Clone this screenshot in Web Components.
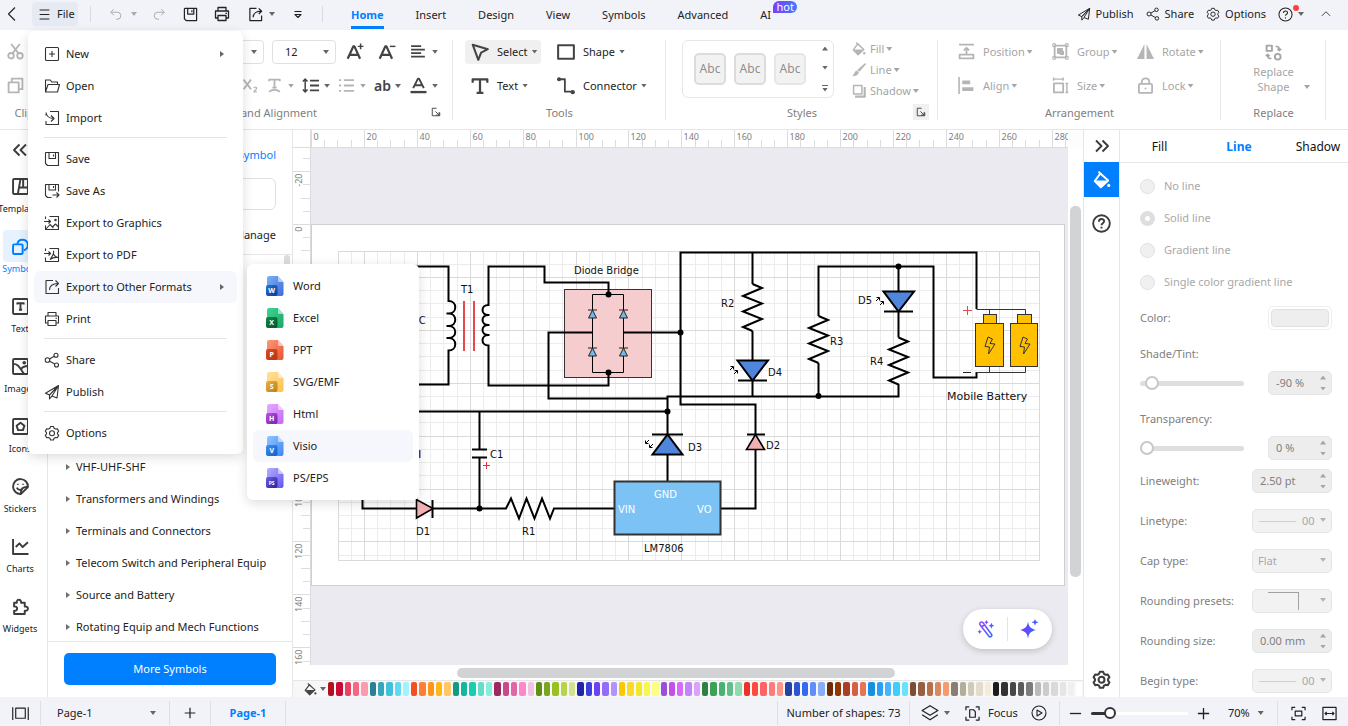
<!DOCTYPE html>
<html lang="en">
<head>
<meta charset="utf-8">
<meta name="viewport" content="width=device-width, initial-scale=1">
<title>Diagram editor</title>
<style>
html,body{margin:0;height:100%}
body{font:11px/16px "Noto Sans","Open Sans",sans-serif;color:#222;background:#fff;overflow:hidden}
</style>
</head>
<body>
<app-shell></app-shell>
<script>
const BASE = `
*{box-sizing:border-box}
:host{display:block}
button,input,select{font:inherit;color:inherit}
button{border:0;background:none;padding:0;margin:0;display:inline-flex;align-items:center;cursor:pointer;white-space:nowrap}
a{color:inherit;text-decoration:none}
.caret{flex:none;width:6px;height:4px;background:var(--caret,#666);clip-path:polygon(0 0,100% 0,50% 100%)}
.caret.up{clip-path:polygon(0 100%,100% 100%,50% 0)}
`;
function define(tag, render) {
  customElements.define(tag, class extends HTMLElement {
    constructor() { super(); this.attachShadow({ mode: 'open' }); }
    connectedCallback() {
      const t = document.createElement('template');
      const out = render(this);
      t.innerHTML = `<style>${BASE}${out.css}</style>${out.html}`;
      this.shadowRoot.replaceChildren(t.content.cloneNode(true));
      if (out.ready) out.ready(this.shadowRoot);
    }
  });
}

/* ---------- icons: 16 unit box, stroke in the current colour ---------- */
const floppy = '<path d="M2 1.5h12.5v13H3.500L1.500 12.500V2z"/><path d="M5 1.500v6h6.500v-6M9.500 3.500v2"/>';
const gear = '<path d="M6.600 1.500h2.800l.7 1.800 1.300.7 1.900-.3 1.400 2.400-1.200 1.500v1.300l1.200 1.500-1.400 2.400-1.900-.3-1.300.7-.7 1.800H6.600l-.7-1.800-1.300-.7-1.900.3-1.400-2.400L2.500 8.900V7.600L1.300 6.100l1.400-2.400 1.900.3 1.300-.7z"/><circle cx="8" cy="8.200" r="2.500"/>';
const shareI = '<circle cx="3.500" cy="8" r="2.300"/><circle cx="12" cy="3.200" r="2"/><circle cx="12.500" cy="13" r="2"/><path d="M5.500 7l4.700-2.700M5.700 9.200l5 2.800"/>';
const plane = '<path d="M14.500 1.500L1.500 9.200l4 1.800zM14.500 1.500L5.500 11v4l2.400-2.800M14.500 1.500L13 14l-5-2z"/>';
const ext = '<path d="M9 1.500H2v13h12.500V9"/><path d="M5.500 11c0-4 3-6.500 8.500-6.500M11.500 1.500l3 3-3 3"/>';
const printer = '<path d="M4 5V1.500h8V5M4 12H1.500V5h13v7H12"/><path d="M4 9.500h8v5H4zM11.500 7.300h1.500"/>';
const bucket = '<path d="M6.500 2.200L1.500 9l5.500 5.500L13.500 8.500z"/><path d="M4.800.5l3 3"/><path fill="currentColor" stroke="none" d="M2 8.500h11.200L7 14.500z"/><circle cx="14" cy="12.800" r="1.400" fill="currentColor" stroke="none"/>';
const ICONS = {
  back: '<path d="M11 1.500L4.500 8l6.500 6.500"/>',
  up: '<path d="M2.500 10.500L8 5l5.500 5.500"/>',
  menu: '<path d="M2 2.500h12M2 8h12M2 13.500h12"/>',
  undo: '<path d="M5.500 2.500L2 6l3.500 3.500M2 6h7.500a4 4 0 010 8H8"/>',
  redo: '<path d="M10.500 2.500L14 6l-3.500 3.500M14 6H6.500a4 4 0 000 8H8"/>',
  save: floppy, print: printer, ext, gear, share: shareI, publish: plane, bucket,
  more: '<path d="M4.500 5.500h7"/><path d="M5 8.500h6L8 11.500z"/>',
  help: '<circle cx="8" cy="8" r="7"/><path d="M5.800 6.500c0-3 4.400-3 4.400-.4 0 1.600-2.200 1.600-2.200 3.300M8 10.800v1.400"/>',
  new: '<rect x="1.500" y="1.500" width="13" height="13" rx="1"/><path d="M8 5v6M5 8h6"/>',
  open: '<path d="M1.500 14V2h4.800l1.500 2h5.700v2.500M1.500 14L4 6.500h11.500L13.500 14z"/>',
  import: '<path d="M6 1.500h8.500v13H2V11M2 5.500V4"/><path d="M2 2.500c.5 3.500 3 6 8 6M7 5.500l3 3-3 3"/>',
  saveas: '<path d="M7.500 14.500h-4l-2-2v-11h13v7"/><path d="M5 1.500v5.500h6.500v-5.500M9.500 3v2M8.500 12h6M12.500 9.500L15 12l-2.500 2.500"/>',
  exgfx: '<path d="M5.500 1.500h9v13h-13v-4M1.500 4V1.500"/><path d="M0 6.500h6.500M4.500 4.500l2 2-2 2M2 14l4-4.500 3.500 3.500M8.500 12l3-3 3 3"/><circle cx="11.500" cy="5" r=".7"/>',
  expdf: '<path d="M5.500 1.500h9v13h-13v-4M1.500 4V1.500"/><path d="M0 6.500h6.500M4.500 4.500l2 2-2 2"/><path d="M9 4c1.500 0 .5 4-3 8.500M9 6c1 3 2 4 5 4.500-3-.5-6 .5-8 2"/>',
  cut: '<circle cx="3.800" cy="12" r="2.600"/><circle cx="12.200" cy="12" r="2.600"/><path d="M5.200 9.800L12 1M10.800 9.800L4 1"/>',
  copy: '<rect x="1.500" y="5" width="9.500" height="9.500"/><path d="M4.500 4.500V1.500h10v10h-3"/>',
  fup: '<path d="M1.500 14L6.500 3h1l5 11M3.500 10.500h7"/><path stroke-width="1.300" d="M13 .5v5M10.500 3h5"/>',
  fdn: '<path d="M1.500 14L6.500 3h1l5 11M3.500 10.500h7"/><path stroke-width="1.300" d="M10.500 3h5"/>',
  align: '<path d="M1 3h9.500M1 6.300h13M1 9.600h9.500M1 12.900h13"/>',
  sub: '<path d="M1.500 2.500l7 9M8.500 2.500l-7 9"/><path stroke-width="1.100" d="M11.200 10.500c.3-1.500 2.800-1.300 2.600.2-.1 1-2.600 2.500-2.600 3.300H14"/>',
  tcurve: '<path d="M3 4V2.500h10V4M8 2.500v7.500M6 10h4M3 14c2-2.500 8-2.500 10 0"/>',
  spacing: '<path stroke-width="1.400" d="M3 2v12M.8 4.300L3 2l2.200 2.300M.8 11.700L3 14l2.200-2.300"/><path stroke-width="1.700" d="M7.500 3.500H16M7.500 8H16M7.500 12.500H16"/>',
  list: '<path d="M5.500 3h9.500M5.500 8h9.500M5.500 13h9.500M1 3h2M1 8h2M1 13h2"/>',
  acolor: '<path stroke-width="1.800" d="M3 10.500L7.500 1.500h1l4.500 9M4.500 7.700h7"/><path stroke-width="2.200" d="M.5 14.200h15"/>',
  launcher: '<path d="M9 2H2v12h12V9"/><path d="M7 7l6 6M13 8v5H8"/>',
  cursor: '<path d="M1.500 1.500L15 5.500 9 8.500l-2.500 6.500z"/>',
  rect: '<rect x="1" y="2" width="14" height="12"/>',
  text: '<path d="M1.500 5V2h13v3M8 2v12M5 14h6"/>',
  connector: '<path d="M2 2h5v11h6.500"/><circle cx="1.800" cy="2" r="1.800" fill="currentColor" stroke="none"/><circle cx="14" cy="13.500" r="1.900" fill="currentColor" stroke="none"/>',
  brush: '<path fill="currentColor" stroke="none" d="M15 0L16 1.500 8.500 10 6 8zM5.500 8.500l2.300 2c-.5 3-3 4.500-7.300 4.500 2-1.500 2-5.500 5-6.500z"/>',
  shadow: '<rect x="1.800" y="1.800" width="9.500" height="9.500"/><path stroke-width="2.500" d="M3.500 14.500H14.500V3.500"/>',
  position: '<path d="M1 1.500h14M1.500 11h13v3.500h-13zM8 11V5M5.500 7L8 4.500 10.500 7"/>',
  group: '<rect x="2.500" y="2.500" width="11" height="11"/><path fill="currentColor" d="M5.500 5.500h4v4h-4zM10.500 7.500v3h-3"/><g stroke-width="1"><circle cx="2" cy="2" r="1.400"/><circle cx="14" cy="2" r="1.400"/><circle cx="2" cy="14" r="1.400"/><circle cx="14" cy="14" r="1.400"/></g>',
  rotate: '<path fill="currentColor" stroke="none" d="M7 1v14H0zM9 1v14h7z"/>',
  alignl: '<path stroke-width="1.500" d="M1 0v16"/><path stroke-width="3.500" d="M4 5h7.500M4 11.500h10.500"/>',
  size: '<rect x="1.800" y="6" width="8.700" height="8.500"/><path stroke-width="1.400" d="M1.500 2h9M1.500.5v3M10.500.5v3M14 6v8.500M12.700 6h2.600M12.700 14.500h2.600"/>',
  lock: '<rect x="1.800" y="6.500" width="12.400" height="8.500" rx="1"/><path d="M4.500 6.500V4.500c0-4.200 7-4.200 7 0v2M8 10v1.500"/>',
  replace: '<path d="M1.500 1.500h5v5h-5z"/><circle cx="12" cy="12" r="2.700"/><path stroke-width="1.500" d="M10 2.500c2.500-.5 3.500.5 3.500 3M11.700 4.500l1.800 1.800 1.800-1.800M6 13.500c-2.500.5-3.500-.5-3.500-3M.7 11.500l1.800-1.800 1.800 1.800"/>',
  dleft: '<path d="M7.500 2.500L2 8l5.500 5.500M14 2.500L8.500 8l5.500 5.500"/>',
  dright: '<path d="M2 2.500L7.500 8 2 13.500M8.500 2.500L14 8l-5.500 5.500"/>',
  templates: '<rect x="1" y="1" width="14" height="14" rx="1"/><path d="M8 1L5.500 15M7 9h8M10.500 1V9"/>',
  symbols: '<rect x="1" y="6" width="9" height="9" rx="1"/><path d="M5 5.500A5 5 0 1111 11.500"/>',
  textbox: '<rect x="1" y="1" width="14" height="14" rx="1"/><path d="M5 6.200V5h6v1.200M8 5v6M6.500 11h3"/>',
  image: '<rect x="1" y="1" width="14" height="14" rx="1"/><path d="M1 5.500c5 0 6 3.500 10 9M8.500 10.500C10 8 12 7.500 15 7.500"/><circle cx="11.500" cy="4.500" r=".8"/>',
  penta: '<rect x="1" y="1" width="14" height="14" rx="1"/><path d="M8 4.500l3.700 2.700-1.400 4.200H5.700L4.300 7.200z"/>',
  sticker: '<path d="M8.500 15A7 7 0 1115 8.500z"/><path d="M8.500 15c-.5-5 2-7 6.500-6.500M4.500 9c1 2 2.500 2.500 4 2M5.500 5.500v.8M10.500 5.500v.8"/>',
  chart: '<path d="M1 1v14h14.500M3.500 8.500L7 5l3 3.500L15 4"/>',
  puzzle: '<path d="M2 4.500h2.600c-1-3.800 4.800-3.800 3.900 0H12v3.600c4-.8 4 4.600 0 3.900V15H2v-3c3.800.8 3.800-4.800 0-4z"/>',
  pages: '<rect x="3.500" y="3" width="9" height="9.500"/><path d="M.7 2v12M15.300 2v12"/>',
  plus: '<path d="M8 2v12M2 8h12"/>', minus: '<path d="M2 8h12"/>',
  layers: '<path d="M8 1.500l7 4.200-7 4.300-7-4.300zM1 9.500l7 4.500 7-4.500"/>',
  focus: '<path d="M1 4.500V1h3.500M11.500 1H15v3.500M15 11.500V15h-3.500M4.500 15H1v-3.500M5 4h4l2 2v6H5z"/>',
  play: '<circle cx="8" cy="8" r="7"/><path d="M6 5l5 3-5 3z"/>',
  fit: '<path d="M1 4.500V1.500h3.500M11.500 1.500H15v3M15 11.500v3h-3.500M4.500 14.500H1v-3"/><rect x="4.500" y="5.500" width="7" height="5"/>',
  fitw: '<rect x="1" y="1.500" width="14" height="13"/><path d="M3.500 8h9M5 6.300L3.300 8 5 9.700M11 6.300L12.700 8 11 9.700"/>',
};
define('app-icon', el => {
  const s = el.getAttribute('size') || 16, w = el.getAttribute('weight') || 1.1;
  return {
    css: `:host{display:block;flex:none;width:${s}px;height:${s}px}svg{display:block;width:100%;height:100%;overflow:visible}`,
    html: `<svg viewBox="0 0 16 16" fill="none" stroke="currentColor" stroke-width="${w}" stroke-linejoin="round" aria-hidden="true">${ICONS[el.getAttribute('name')] || ''}</svg>`
  };
});

/* coloured document badge of a file format */
define('file-badge', el => {
  const [a, b, c, d] = el.getAttribute('colors').split(','), t = el.getAttribute('mark');
  return {
    css: `:host{flex:none;width:18px;height:20px}svg{display:block}text{font:bold ${t.length > 1 ? 5 : 7}px "Open Sans",sans-serif}`,
    html: `<svg width="18" height="20" viewBox="0 0 18 20"><defs>
      <linearGradient id="p" x2="1" y2="1"><stop stop-color="${a}"/><stop offset="1" stop-color="${b}"/></linearGradient>
      <linearGradient id="q" x2="1" y2="1"><stop stop-color="${c}"/><stop offset="1" stop-color="${d}"/></linearGradient></defs>
      <path fill="url(#p)" d="M3 0h9l5.500 6v12a2 2 0 01-2 2H3a2 2 0 01-2-2V2a2 2 0 012-2z"/>
      <path fill="#fff" fill-opacity=".55" d="M12 0l5.500 6H13a1 1 0 01-1-1z"/>
      <rect y="9" width="11.500" height="11" rx="2" fill="url(#q)"/>
      <text x="5.700" y="${t.length > 1 ? 16.500 : 17.200}" fill="#fff" text-anchor="middle">${t}</text></svg>`
  };
});

/* ---------- title bar ---------- */
define('title-bar', () => ({
  css: `:host{display:flex;align-items:center;height:30px;background:#f2f3f9;padding:0 16px 2px 4px}
  .file{gap:6px;height:24px;width:46px;padding-left:6px;background:#e6eaf3;border-radius:4px;margin-left:12px}
  .sep{width:1px;height:16px;background:#d9dbe1}
  .tools{display:flex;align-items:center;margin-left:12px;width:233px}
  .tools button{height:24px;gap:8px}
  .dim{color:#aaa;--caret:#aaa}
  nav{display:flex;gap:32px;margin-left:28px;flex:1}
  nav button{height:28px;border-top:3px solid transparent;border-bottom:3px solid transparent;margin-bottom:-2px}
  nav .on{color:#007fff;font-weight:700;border-bottom-color:#007fff}
  .ai{position:relative}
  .hot{position:absolute;left:13px;top:-3px;width:24px;height:12px;line-height:11px;border-radius:6px 6px 6px 0;background:linear-gradient(90deg,#7a3ff5,#3f7bff);color:#fff;text-align:center}
  .right{display:flex;align-items:center;gap:12px}
  .right button{gap:5px}
  .help{position:relative}.help i{position:absolute;left:15px;top:-2px;width:6px;height:6px;border-radius:3px;background:#ff4040}
  .u{margin-left:4px}`,
  html: `<button aria-label="Back"><app-icon name="back"></app-icon></button>
  <button class="file"><app-icon name="menu" size="13" weight="1.4"></app-icon>File</button>
  <div class="tools"><span class="sep"></span>
    <button class="dim" style="margin-left:18px" aria-label="Undo"><app-icon name="undo" size="14"></app-icon><span class="caret"></span></button>
    <button class="dim" style="margin-left:15px" aria-label="Redo"><app-icon name="redo" size="14"></app-icon></button>
    <button style="margin-left:17px" aria-label="Save"><app-icon name="save" size="15" weight="1.3"></app-icon></button>
    <button style="margin-left:16px" aria-label="Print"><app-icon name="print" weight="1.300"></app-icon></button>
    <button style="margin-left:18px;gap:6px" aria-label="Export"><app-icon name="ext" size="15" weight="1.300"></app-icon><span class="caret"></span></button>
    <button style="margin-left:15px" aria-label="More"><app-icon name="more"></app-icon></button>
    <span class="sep" style="margin-left:16px"></span></div>
  <nav><button class="on">Home</button><button>Insert</button><button>Design</button><button>View</button><button>Symbols</button><button>Advanced</button><button class="ai">AI<span class="hot">hot</span></button></nav>
  <div class="right"><button><app-icon name="publish" size="14"></app-icon>Publish</button><button><app-icon name="share" size="14"></app-icon>Share</button><button><app-icon name="gear" size="14"></app-icon>Options</button>
  <button class="help" aria-label="Help"><app-icon name="help" size="15"></app-icon><span class="caret"></span><i></i></button><button class="u" aria-label="Collapse ribbon"><app-icon name="up" size="12"></app-icon></button></div>`
}));

/* ---------- ribbon ---------- */
define('ribbon-button', el => {
  const n = el.getAttribute('icon'), caret = !el.hasAttribute('nocaret');
  return {
    css: `:host{display:block}button{height:24px;width:100%;padding:0 6px;border-radius:4px;gap:var(--gap,8px)}
    :host([active]) button{background:#f0f0f0}:host([off]){color:#a5a5a5;--caret:#a5a5a5}
    :host([icononly]) button{padding:0 0 0 2px;gap:5px}.t{display:flex;align-items:center;gap:4px}:host([off]) .t{gap:2px}
    app-icon{color:var(--icon,#444)}:host([off]) app-icon{color:#b5b5b5}
    :host([small]) button{height:20px;padding:0;gap:4px}`,
    html: `<button ${el.title ? `aria-label="${el.title}"` : ''} ${el.hasAttribute('off') ? 'disabled' : ''}>${n ? `<app-icon name="${n}" size="${el.getAttribute('size') || 17}" weight="${el.getAttribute('weight') || 1.7}"></app-icon>` : ''}<span class="t"><slot></slot>${caret ? '<span class="caret"></span>' : ''}</span></button>`
  };
});
define('ribbon-group', el => ({
  css: `:host{display:flex;flex-direction:column;flex:none;position:relative;padding-top:5px}
  :host::after{content:"";position:absolute;right:0;top:10px;bottom:9px;width:1px;background:#e8e8e8}
  .b{height:68px}.l{display:flex;height:20px;align-items:center;justify-content:center;color:#808080}
  .go{position:absolute;right:9px;bottom:9px;width:16px;height:16px;justify-content:center;color:#444}:host([shaded]) .go{background:#f0f0f0}`,
  html: `<div class="b"><slot></slot></div><div class="l">${el.getAttribute('label')}</div>${el.hasAttribute('launcher') ? '<button class="go" aria-label="More settings"><app-icon name="launcher" size="10" weight="1.5"></app-icon></button>' : ''}`
}));
define('ribbon-bar', () => ({
  css: `:host{display:flex;height:100px;background:#fff;border-bottom:1px solid #e6e6e6}
  .row{display:flex;align-items:center;height:34px}.end{justify-content:flex-end;padding-right:9px}
  ribbon-group{height:99px}
  .box{position:relative;display:flex;align-items:center;height:24px;border:1px solid #e0e0e0;border-radius:4px;margin-right:8px}
  .box select{appearance:none;border:0;background:none;width:100%;height:22px;padding:0 12px;outline:0}
  .box .caret{position:absolute;right:6px}
  .i32{width:32px}.i36{width:36px}
  .tools{display:grid;grid-template-columns:77px 120px;column-gap:9px;grid-auto-rows:34px;align-items:center;padding-left:12px;justify-items:start}
  .sel{width:76px}
  .styles{display:flex;padding:5px 0 0 16px}
  .gal{display:flex;align-items:center;width:152px;height:58px;border:1px solid #e6e6e6;border-radius:6px;padding-left:11px;gap:8px}
  .gal button{width:32px;height:32px;justify-content:center;border:2px solid #dcdcdc;border-radius:5px;background:#f2f2f2;color:#909090;font-size:12px}
  .gal button.c{border-color:#e6e6e6}
  .gal div{display:flex;flex-direction:column;gap:15px;margin-left:8px}
  .gal b{display:block;width:6px;padding-top:2px;border-top:1px solid #666}.gal b .caret{display:block}
  .dr{margin-left:18px;margin-top:-1px}
  .arr{display:grid;grid-template-columns:94px 85px 80px;grid-auto-rows:34px;align-items:center;padding-left:14px}
  .rep{width:100%;height:68px;flex-direction:column;justify-content:center;line-height:15px;color:#a5a5a5;gap:3px;position:relative}
  .rep .caret{position:absolute;right:16px;bottom:14px;background:#a5a5a5}
  .ab{display:block;width:17px;font-size:14px;font-weight:600;color:#444}`,
  html: `
  <ribbon-group label="Clipboard" style="width:79px"><div class="row"><ribbon-button icononly nocaret off icon="cut" title="Cut" style="margin-left:5px"></ribbon-button></div><div class="row"><ribbon-button icononly nocaret off icon="copy" title="Copy" style="margin-left:5px"></ribbon-button></div></ribbon-group>
  <ribbon-group label="Font and Alignment" launcher style="width:374px">
    <div class="row end"><div class="box" style="width:160px"><select aria-label="Font"></select><span class="caret"></span></div>
      <div class="box" style="width:64px;margin-right:4px"><select aria-label="Font size"><option>12</option></select><span class="caret"></span></div>
      <ribbon-button class="i32" icononly nocaret icon="fup" size="18" weight="2" title="Increase font size" style="padding-left:4px;box-sizing:border-box"></ribbon-button>
      <ribbon-button class="i36" icononly nocaret icon="fdn" size="18" weight="2" title="Decrease font size" style="padding-left:4px;box-sizing:border-box"></ribbon-button>
      <ribbon-button class="i36" icononly icon="align" title="Alignment"></ribbon-button></div>
    <div class="row end"><ribbon-button style="width:24px" icononly nocaret off icon="sub" title="Subscript"></ribbon-button>
      <ribbon-button class="i36" icononly off icon="tcurve" title="Text path"></ribbon-button>
      <ribbon-button class="i36" icononly icon="spacing" title="Line spacing"></ribbon-button>
      <ribbon-button class="i36" icononly off icon="list" title="Bullets"></ribbon-button>
      <ribbon-button class="i36" icononly title="Case"><span class="ab">ab</span></ribbon-button>
      <ribbon-button class="i36" icononly icon="acolor" title="Font color"></ribbon-button></div>
  </ribbon-group>
  <ribbon-group label="Tools" style="width:213px"><div class="tools">
    <ribbon-button class="sel" active icon="cursor" size="18" weight="1.8">Select</ribbon-button><ribbon-button icon="rect" size="18" weight="1.8">Shape</ribbon-button>
    <ribbon-button icon="text" size="18" weight="2">Text</ribbon-button><ribbon-button icon="connector" size="18" weight="1.600">Connector</ribbon-button></div></ribbon-group>
  <ribbon-group label="Styles" launcher shaded style="width:272px"><div class="styles"><div class="gal"><button>Abc</button><button>Abc</button><button class="c">Abc</button><div><span class="caret up"></span><span class="caret"></span><b><span class="caret"></span></b></div></div>
    <div class="dr"><ribbon-button small off icon="bucket" size="14">Fill</ribbon-button><ribbon-button small off icon="brush" size="14">Line</ribbon-button><ribbon-button small off icon="shadow" size="14">Shadow</ribbon-button></div></div></ribbon-group>
  <ribbon-group label="Arrangement" style="width:283px"><div class="arr">
    <ribbon-button off icon="position">Position</ribbon-button><ribbon-button off icon="group">Group</ribbon-button><ribbon-button off icon="rotate">Rotate</ribbon-button>
    <ribbon-button off icon="alignl">Align</ribbon-button><ribbon-button off icon="size">Size</ribbon-button><ribbon-button off icon="lock">Lock</ribbon-button></div></ribbon-group>
  <ribbon-group label="Replace" style="width:105px"><button class="rep" disabled><app-icon name="replace" size="17" weight="1.800"></app-icon><span>Replace<br>Shape</span><span class="caret"></span></button></ribbon-group>`
}));

/* ---------- left rail ---------- */
const rail = [['templates', 'Templates'], ['symbols', 'Symbols'], ['textbox', 'Text'], ['image', 'Images'], ['penta', 'Icons'], ['sticker', 'Stickers'], ['chart', 'Charts'], ['puzzle', 'Widgets']];
define('side-rail', () => ({
  css: `:host{width:48px;border-right:1px solid #e6e6e6;background:#fff;overflow:hidden;color:#3c3c3c}
  .c{height:40px;width:40px;justify-content:center}
  .i{display:flex;flex-direction:column;width:40px;height:60px;font-size:9px;line-height:14px;color:#222}
  .i span{width:34px;height:32px;display:grid;place-items:center;border-radius:4px;color:#3c3c3c}
  .i:nth-of-type(3){color:#007fff}.i:nth-of-type(3) span{color:#007fff;background:#e6f2ff}`,
  html: `<button class="c" aria-label="Collapse"><app-icon name="dleft" weight="1.900"></app-icon></button>` +
    rail.map(([i, t]) => `<button class="i"><span><app-icon name="${i}" size="17" weight="1.800"></app-icon></span>${t}</button>`).join('')
}));

/* ---------- symbol panel ---------- */
define('symbol-panel', () => ({
  css: `:host{width:245px;border-right:1px solid #e6e6e6;display:flex;flex-direction:column;background:#fff;position:relative}
  .top{display:flex;justify-content:flex-end;height:48px;align-items:center;padding:2px 16px 0;color:#007fff}
  .q{height:32px;margin:0 16px;border:1px solid #e0e0e0;border-radius:6px;background:#fff}
  .m{display:flex;justify-content:flex-end;align-items:center;height:45px;padding:5px 16px 0;border-bottom:1px solid #e6e6e6}
  ul{list-style:none;margin:0;padding:0;flex:1;display:flex;flex-direction:column;justify-content:flex-end;overflow:hidden;min-height:0}
  li button{height:32px;width:100%;padding:4px 0 0 18px;gap:6px}
  li i{width:4px;height:6px;background:#707070;clip-path:polygon(0 0,100% 50%,0 100%)}
  .thumb{position:absolute;right:2px;top:125px;width:6px;height:150px;border-radius:3px;background:#dcdce0}
  .f{border-top:1px solid #e6e6e6;padding:11px 16px 12px}
  .f button{width:100%;height:32px;justify-content:center;background:#007fff;color:#fff;border-radius:5px}`,
  html: `<div class="top"><button>My Symbol</button></div><input class="q" aria-label="Search symbols"><div class="m"><button>Manage</button></div>
  <ul>${['VHF-UHF-SHF', 'Transformers and Windings', 'Terminals and Connectors', 'Telecom Switch and Peripheral Equip', 'Source and Battery', 'Rotating Equip and Mech Functions'].map(t => `<li><button><i></i>${t}</button></li>`).join('')}</ul>
  <div class="thumb"></div><div class="f"><button>More Symbols</button></div>`
}));

/* ---------- rulers: 20 units are 52.9 px, drawn for the length that is on screen ---------- */
const U = 2.6455;
define('canvas-ruler', el => {
  const v = el.hasAttribute('vertical'), origin = v ? 76 : 0;
  const draw = length => {
    let s = '';
    for (let u = v ? -25 : 0; origin + u * U < length; u += 5) {
      const p = Math.round(origin + u * U) + .5, major = u % 20 === 0;
      s += v ? `<path d="M${major ? 0 : u % 10 ? 10 : 8} ${p}H18"/>` : `<path d="M${p} ${major ? 0 : 10}V18"/>`;
      if (major) s += v ? `<text transform="translate(9 ${p + 2}) rotate(-90)" text-anchor="end">${u}</text>` : `<text x="${p + 2}" y="10">${u}</text>`;
    }
    return s;
  };
  return {
    css: `:host{overflow:hidden;background:#fff;${v ? 'border-right' : 'border-bottom'}:1px solid #dcdce0}svg{display:block;width:100%;height:100%}path{stroke:#dcdce0;fill:none}text{font-size:9px;fill:#808080;stroke:none}`,
    html: `<svg aria-hidden="true"></svg>`,
    ready: root => new ResizeObserver(() => {
      const svg = root.querySelector('svg');
      svg.innerHTML = draw(v ? el.clientHeight : el.clientWidth);
    }).observe(el)
  };
});

/* ---------- circuit drawing ---------- */
const dot = (x, y) => `<circle cx="${x}" cy="${y}" r="3" fill="#000" stroke="none"/>`;
const zig = (x, y) => `M${x} ${y}l9.500 4l-19 8l19 7.500l-19 8l19 7.500l-19 8l9.500 4`;
const label = (x, y, t, c = '#111') => `<text x="${x}" y="${y}" fill="${c}">${t}</text>`;
const mini = (x, y) => `<path d="M${x - 4.500} ${y}h9" stroke="#222"/><path d="M${x} ${y}l4 8h-8z" fill="#6fb9ef" stroke="#222"/>`;
const rays = (x, y, up) => `<g stroke-width="1" transform="translate(${x} ${y})${up ? '' : ' rotate(180)'}"><path d="M-4 1L-1-2M-3.500-2.500h3v3M0 5L3 2M.5 1.500h3v3"/></g>`;
define('circuit-diagram', () => {
  const left = 338, right = 1040, top = 251, bottom = 561;
  let minor = '', major = '';
  for (let k = 3; k < 56; k++) { const x = Math.round(311 + k * 5 * U) + .5; if (x < right) k % 4 ? minor += `M${x} ${top}V${bottom}` : major += `M${x} ${top}V${bottom}`; }
  for (let k = 3; k < 26; k++) { const y = Math.round(224 + k * 5 * U) + .5; if (y < bottom) k % 4 ? minor += `M${left} ${y}H${right}` : major += `M${left} ${y}H${right}`; }
  return {
    css: `:host{background:#ebeaf0;overflow:hidden}svg{display:block;width:100%;height:100%}text{font:10px "DejaVu Sans",sans-serif;stroke:none}.b{font-size:11px}`,
    html: `<svg role="img" aria-label="Power supply circuit"><g transform="translate(-311 -148)" fill="none">
    <rect x="311.500" y="224.500" width="753" height="361" fill="#fff" stroke="#cfcfd3"/>
    <path d="${minor}" stroke="#ececec"/><path d="${major}" stroke="#dadada"/><rect x="338.500" y="251.500" width="701" height="309" stroke="#dadada"/>
    <rect x="564.500" y="289.500" width="87" height="88" fill="#f5cdcf" stroke="#333"/>
    <g stroke="#000" stroke-width="2">
      <path d="M380 266.500H448.500V301c9 0 9 12.500 0 12.500h-2h2c9 0 9 12.500 0 12.500h-2h2c9 0 9 12 0 12h-2h2c9 0 9 12.500 0 12.500V384.500H380"/>
      <path d="M608.500 295V282.500H544.500V266.500H488.500V305c-8 0-8 10 0 10h1h-1c-8 0-8 10 0 10h1h-1c-8 0-8 10 0 10h1h-1c-8 0-8 10.500 0 10.500V385.500H608.500V372"/>
      <path d="M592.500 332.500H548.500V398.500H667.500M623.500 332.500H680.500"/>
      <path d="M976.500 309V252.500H680.500V404.500H755.500V508.500H720.500"/>
      <path d="M380 411.500H667.500M667.500 481V396.500H898.500V384"/>
      <path d="M479.500 411.500V449.500M472 449.500h15M472 457.500h15M479.500 457.500V508.500"/>
      <path d="M362.500 490V508.500H506l5-10 8 20 7.500-20 8 20 7.500-20 8 20 4-10H614"/>
      <path d="M752.500 252.500V284M752.500 331V396.500"/><path d="${zig(752.5, 284)}"/>
      <path d="M818.500 396.500V363M818.500 316V266.500H933.500V377.500H976.500V372"/><path d="${zig(818.5, 316)}"/>
      <path d="M898.500 266.500V337.500"/><path d="${zig(898.5, 337.5)}"/>
      <path d="M737.500 360.500H768L752.500 380.500z" fill="#4f86dc"/><path d="M738 380.500h29"/>
      <path d="M883.500 291.500H914L898.500 311.500z" fill="#4f86dc"/><path d="M884 311.500h29"/>
      <path d="M652.500 454.500H682.500L667.500 434.500z" fill="#4f86dc"/><path d="M652 434.500h31"/>
      <path stroke-width="1.600" d="M746.500 449.500H764.500L755.500 434.500z" fill="#f3b0b2"/><path d="M747 434.500h18"/>
      <path stroke-width="1.600" d="M416.500 499.500V518L433 508.500z" fill="#f3b0b2"/><path d="M432.500 500v18"/>
    </g>
    <path d="M592.500 294.500H623.500V372.500H592.500z" stroke="#000"/>
    ${mini(592.5, 310)}${mini(623.5, 310)}${mini(592.5, 348)}${mini(623.5, 348)}
    <path d="M464 301v50M474 301v50" stroke="#e5484d" stroke-width="2"/>
    <rect x="614.500" y="481.500" width="106" height="53" fill="#7cc2f4" stroke="#333" stroke-width="2"/>
    ${dot(608.5, 294.5)}${dot(608.5, 372.5)}${dot(680.5, 332.5)}${dot(667.5, 411.5)}${dot(479.5, 508.5)}${dot(818.5, 396)}${dot(898.5, 266.5)}
    <g stroke="#000">${rays(734, 369, 1)}${rays(880, 300, 1)}${rays(649, 445, 0)}</g>
    <g stroke="#333"><path d="M976.500 309.500H1025.500V372.500H976.500M989.500 309.500V372.500"/>
      <g fill="#ffc000"><rect x="983.500" y="314.500" width="13" height="9"/><rect x="975.500" y="323.500" width="28" height="43"/><rect x="1017.500" y="314.500" width="14" height="9"/><rect x="1010.500" y="323.500" width="27" height="43"/>
      <path d="M988 337l-3 9.500 4.500.500-1 7 6.500-10-5-.5 2.500-4.500zM1023 337l-3 9.500 4.500.500-1 7 6.500-10-5-.5 2.500-4.500z"/></g></g>
    <path d="M963 310.500h9M967.500 306v9" stroke="#e5484d"/><path d="M963 372.500h8" stroke="#222"/><path d="M483 465.500h7M486.500 462v7" stroke="#e8303c"/><path d="M419.500 450v8" stroke="#2b4a8c" stroke-width="2"/>
    ${label(461, 293, 'T1')}${label(412, 324, 'AC')}${label(574, 274, 'Diode Bridge')}${label(721, 307, 'R2')}${label(768, 376, 'D4')}${label(830, 345, 'R3')}${label(858, 304, 'D5')}${label(870, 365, 'R4')}
    ${label(490, 458, 'C1')}${label(416, 535, 'D1')}${label(522, 535, 'R1')}${label(688, 451, 'D3')}${label(766, 449, 'D2')}${label(644, 552, 'LM7806')}
    ${label(654, 498, 'GND', '#fff')}${label(618, 513, 'VIN', '#fff')}${label(697, 513, 'VO', '#fff')}
    <text class="b" x="947" y="400" fill="#111">Mobile Battery</text></g></svg>`
  };
});

const COLORS = 'b01120 cc0a35 e84363 fa6580 fa9bae 2a8194 35a6c0 40c0dd 5fdaf0 a3f1ff f04f23 ff7f37 ff9519 ffb619 ffc765 149a82 16b59d 18cdb2 66dccb 85eedd 9c2960 c64a8c e066a5 fc88cb f0c3e0 618f11 7aa423 98c022 b4d44a d2e190 2024ac 3b40dd 6d42f3 936cfb ae95fa fcc800 fadb2d f0e92a fbf64e fdff83 9b4ddc c251ea d36cfb c285fd dba1fe 2e8044 3ca157 4bb173 63bf8a 8fdaae eb3328 ff4a3f fd6365 ff7a7a ff9484 2641a5 2d55d1 326af3 638dfe 88aff6 6e2c04 923703 a83f29 d46043 e47558 158fde 2a9ff8 47b3ff 3dcefd 68e3fd 7a4f37 985e43 b6704c d98860 f49b6f 897e73 b3ad9b cfcbb8 e3dccc f3ecda 1c1c1c 333131 474747 5b5b5b 7c7c7c bababa cbcbcb d9d9d9 e5e5e5 f0f0f0 ffffff'.split(' ');
define('color-strip', () => ({
  css: `:host{display:flex;align-items:center;height:17px;background:#f7f7f7;border-top:1px solid #e6e6e6;padding-left:11px}
  .f{gap:3px;width:24px;color:#444}.s{display:flex;flex:1;gap:2px;min-width:0}.s button{flex:1;height:14px;border-radius:2px;min-width:0}`,
  html: `<button class="f" aria-label="Fill color"><app-icon name="bucket" size="13" weight="1.500"></app-icon><span class="caret"></span></button><div class="s">${COLORS.map(c => `<button aria-label="#${c}" style="background:#${c}"></button>`).join('')}</div>`
}));

define('drawing-area', () => ({
  css: `:host{flex:1;min-width:0;display:grid;grid-template:18px minmax(0,1fr) 15px 17px/18px minmax(0,1fr) 15px;background:#fff;position:relative}
  .corner{border:solid #dcdce0;border-width:0 1px 1px 0}.gap{background:#fdfdfd}
  .v{padding:58px 2px 88px;grid-column:3}.v i,.h i{display:block;height:100%;border-radius:5px;background:#d1d3d5}
  .h{grid-column:1/4;padding:3px 188px 2px 164px}color-strip{grid-column:1/4}
  .ai{position:absolute;right:31px;bottom:48px;width:89px;height:40px;border-radius:20px;background:#fff;box-shadow:0 2px 6px #0000002e;display:flex;align-items:center;padding:0 2px}
  .ai button{flex:1;justify-content:center}.ai button+button{border-left:1px solid #e4e4e8;height:24px}`,
  html: `<div class="corner"></div><canvas-ruler></canvas-ruler><div class="gap"></div>
  <canvas-ruler vertical></canvas-ruler><circuit-diagram></circuit-diagram><div class="v"><i></i></div><div class="h"><i></i></div><color-strip></color-strip>
  <div class="ai"><button aria-label="Magic tools"><svg width="18" height="18" viewBox="0 0 20 20" fill="none"><defs><linearGradient id="g" x2="1" y2="1"><stop stop-color="#9a45ff"/><stop offset="1" stop-color="#2f6bff"/></linearGradient></defs>
    <path stroke="url(#g)" stroke-width="1.700" d="M3.300 3.200a2 2 0 013.200-.4l9.500 13a1.700 1.700 0 01-2.700 2.200L3.500 5.500a2 2 0 01-.2-2.300zM5 7.500l4-2.500"/><path fill="url(#g)" d="M10.500 0l.8 1.700 1.700.8-1.700.8-.8 1.700-.8-1.700-1.700-.8 1.700-.8zM16 3l1 2.300 2.300 1-2.300 1-1 2.300-1-2.300-2.300-1 2.300-1zM3 10.500l.8 1.700 1.700.8-1.700.8L3 15.500l-.8-1.700L.500 13l1.700-.8z"/></svg></button>
  <button aria-label="AI assistant"><svg width="20" height="20" viewBox="0 0 20 20"><defs><linearGradient id="h" x2="1"><stop stop-color="#7a3cff"/><stop offset="1" stop-color="#2f6bff"/></linearGradient></defs><path fill="url(#h)" d="M9 2.500c1 5.500 2.500 7 8 8.500-5.500 1.500-7 3-8 8.500-1-5.500-2.500-7-8-8.500 5.500-1.500 7-3 8-8.500zM16 0l1 2.300 2.500 1-2.500 1L16 6.500l-1-2.200-2.500-1 2.500-1z"/></svg></button></div>`
}));

/* ---------- right side ---------- */
define('tool-rail', () => ({
  css: `:host{width:37px;border:solid #e6e6e6;border-width:0 1px;display:flex;flex-direction:column;align-items:center;color:#3c3c3c;background:#fff}
  button{width:35px;height:35px;justify-content:center}.f{height:32px}.on{background:#007fff;color:#fff}.h{margin-top:9px}.s{margin-top:auto}`,
  html: `<button class="f" aria-label="Expand"><app-icon name="dright" weight="1.900"></app-icon></button><button class="on" aria-label="Fill and line"><app-icon name="bucket" size="18" weight="1.700"></app-icon></button>
  <button class="h" aria-label="Help"><app-icon name="help" size="19" weight="1.600"></app-icon></button><button class="s" aria-label="Settings"><app-icon name="gear" size="19" weight="1.700"></app-icon></button>`
}));

define('line-properties', () => {
  const spin = (id, v, w) => `<span class="box ${w}"><input id="${id}" value="${v}" disabled><span class="st"><i class="caret up"></i><i class="caret"></i></span></span>`;
  const sel = (id, v, x = '') => `<span class="box w soft ${x}"><select id="${id}" disabled><option>${v}</option></select><i class="caret"></i></span>`;
  const row = (id, t, c) => `<div class="row"><label for="${id}">${t}</label>${c}</div>`;
  return {
    css: `:host{width:228px;background:#fff;overflow:hidden;color:#808080;--caret:#b5b5b5}
    nav{display:grid;grid-template-columns:79px 80px 78px;height:33px;border-bottom:1px solid #e6e6e6;color:#111;font-size:12px}
    nav button{justify-content:center;padding-top:2px}nav .on{color:#007fff;font-weight:700}
    .p{padding:7px 16px 0 20px;height:534px}
    .r{display:flex;align-items:center;height:32px;gap:8px;color:#a8a8a8}
    .r input{appearance:none;margin:0 1px 0 0;width:15px;height:15px;border-radius:8px;background:#f0f0f0;border:1px solid #e0e0e0}
    .r input:checked{border:5px solid #dedede;background:#fff}
    .row{display:flex;align-items:center;justify-content:space-between;height:40px}.t{display:flex;align-items:center;height:32px}.g{margin-top:7px}
    .sl{display:flex;align-items:center;justify-content:space-between;height:26px}
    .box{display:flex;align-items:center;position:relative;width:64px;height:24px;border:1px solid #e4e4e4;border-radius:5px;background:#ededed}
    .w{width:80px}.soft{background:#f2f2f2;color:#a8a8a8}
    .box input{width:100%;border:0;background:none;padding:0 0 0 7px;color:#808080}
    .st{position:absolute;right:5px;display:grid;gap:7px}.st .caret{background:#a5a5a5}
    select{appearance:none;width:100%;border:0;background:none;padding:0 5px;opacity:1;color:#a8a8a8}.box>.caret{position:absolute;right:5px;top:8px}
    .ln select{padding-left:49px}.ln::before{content:"";position:absolute;left:6px;width:37px;height:1px;background:#cfcfcf}
    .co::before{content:"";position:absolute;left:15px;top:2px;width:30px;height:17px;border:solid #a0a0a0;border-width:1px 1px 0 0}
    .sw{width:64px;height:24px;padding:2px;border:1px solid #eee;border-radius:5px;background:#fff}.sw::-webkit-color-swatch-wrapper{padding:0}.sw::-webkit-color-swatch{border:1px solid #e0e0e0;border-radius:4px}
    input[type=range]{appearance:none;width:104px;height:14px;margin:0;background:none}
    input[type=range]::-webkit-slider-runnable-track{height:5px;border-radius:3px;background:#dedede}
    input[type=range]::-webkit-slider-thumb{appearance:none;width:14px;height:14px;margin-top:-5px;border-radius:7px;background:#fff;border:2px solid #c8c8c8}`,
    html: `<nav><button>Fill</button><button class="on">Line</button><button>Shadow</button></nav><div class="p">
    ${['No line', 'Solid line', 'Gradient line', 'Single color gradient line'].map((t, i) => `<label class="r"><input type="radio" name="l" disabled ${i == 1 ? 'checked' : ''}>${t}</label>`).join('')}
    ${row('c', 'Color:', '<input class="sw" id="c" type="color" value="#eeeeee" disabled>')}
    <label class="t" for="s">Shade/Tint:</label><div class="sl"><input type="range" id="s" min="-100" value="-90" disabled>${spin('s2', '-90 %', '')}</div>
    <label class="t g" for="t">Transparency:</label><div class="sl"><input type="range" id="t" value="0" disabled>${spin('t2', '0 %', '')}</div>
    ${row('lw', 'Lineweight:', spin('lw', '2.50 pt', 'w'))}${row('lt', 'Linetype:', sel('lt', '00', 'ln'))}${row('ct', 'Cap type:', sel('ct', 'Flat'))}${row('rp', 'Rounding presets:', sel('rp', '', 'co'))}${row('rs', 'Rounding size:', spin('rs', '0.00 mm', 'w'))}${row('bt', 'Begin type:', sel('bt', '00', 'ln'))}</div>`
  };
});

/* ---------- status bar ---------- */
define('status-bar', () => ({
  css: `:host{display:flex;align-items:center;height:29px;background:#f2f3f9;padding-top:3px}
  .sep{width:1px;height:24px;background:#dedfe6;flex:none}
  .pg{position:relative;display:flex;align-items:center;width:128px}.pg select{appearance:none;border:0;background:none;width:100%;padding:0 16px}.pg .caret{position:absolute;right:13px}
  .ic{width:40px;justify-content:center}.tab{width:74px;justify-content:center;color:#007fff;font-weight:700}.sp{flex:1}
  .n{width:131px;text-align:center}.ly{width:48px;margin-left:11px;gap:5px}.fo{width:66px;gap:8px}.pl{width:28px}
  input{appearance:none;width:97px;height:14px;margin:0 8px;background:none}
  input::-webkit-slider-runnable-track{height:3px;border-radius:2px;background:linear-gradient(90deg,#333 20px,#fff 20px)}
  input::-webkit-slider-thumb{appearance:none;width:12px;height:12px;margin-top:-5px;border-radius:6px;background:#fff;border:2px solid #333}
  .z{width:49px;gap:8px;margin-left:17px}`,
  html: `<button class="ic" aria-label="Page view"><app-icon name="pages" size="17"></app-icon></button><span class="sep"></span>
  <div class="pg"><select aria-label="Page"><option>Page-1</option></select><span class="caret"></span></div><span class="sep"></span>
  <button class="ic" aria-label="Add page"><app-icon name="plus" size="14" weight="1.400"></app-icon></button><span class="sep"></span><button class="tab">Page-1</button><span class="sep"></span><span class="sp"></span>
  <span class="sep"></span><span class="n">Number of shapes: 73</span><span class="sep"></span>
  <button class="ly" aria-label="Layers"><app-icon name="layers" size="18"></app-icon><span class="caret"></span></button><button class="fo" style="margin-left:-4px"><app-icon name="focus" size="15" weight="1.300"></app-icon>Focus</button><button class="pl" aria-label="Present"><app-icon name="play"></app-icon></button><span class="sep"></span>
  <button style="margin-left:8px" aria-label="Zoom out"><app-icon name="minus" size="15" weight="1.400"></app-icon></button><input type="range" value="15" aria-label="Zoom"><button aria-label="Zoom in"><app-icon name="plus" size="15" weight="1.400"></app-icon></button>
  <button class="z">70%<span class="caret"></span></button><span class="sep"></span><button class="ic" aria-label="Fit page"><app-icon name="fit" size="15" weight="1.300"></app-icon></button><button style="width:30px;padding-left:4px" aria-label="Fit width"><app-icon name="fitw" size="15" weight="1.300"></app-icon></button>`
}));

/* ---------- menus ---------- */
define('menu-item', el => ({
  css: `button{width:100%;height:32px;padding-left:var(--pad,10px);gap:var(--mgap,6px);border-radius:6px;position:relative}
  :host([on]) button{background:#f5f7fc}
  i{position:absolute;right:13px;width:4px;height:6px;background:#666;clip-path:polygon(0 0,100% 50%,0 100%)}app-icon{color:#333}`,
  html: `<button role="menuitem">${el.hasAttribute('icon') ? `<app-icon name="${el.getAttribute('icon')}"></app-icon>` : '<slot name="icon"></slot>'}<slot></slot>${el.hasAttribute('sub') ? '<i></i>' : ''}</button>`
}));
define('file-menu', () => ({
  css: `:host{background:#fff;border-radius:6px;box-shadow:0 3px 12px #00000024;padding:7px 6px 5px}hr{height:1px;border:0;background:#e4e4e4;margin:3px 10px 5px}`,
  html: `<menu-item icon="new" sub>New</menu-item><menu-item icon="open">Open</menu-item><menu-item icon="import">Import</menu-item><hr>
  <menu-item icon="save">Save</menu-item><menu-item icon="saveas">Save As</menu-item><menu-item icon="exgfx">Export to Graphics</menu-item><menu-item icon="expdf">Export to PDF</menu-item><menu-item icon="ext" sub on>Export to Other Formats</menu-item><menu-item icon="print">Print</menu-item><hr>
  <menu-item icon="share">Share</menu-item><menu-item icon="publish">Publish</menu-item><hr><menu-item icon="gear">Options</menu-item>`
}));
const FORMATS = [['Word', 'W', '#7ab2f5,#3d6bdc,#2c6fd6,#0d3c8c'], ['Excel', 'X', '#3fd493,#1aa866,#12884a,#065228'], ['PPT', 'P', '#ff9a78,#e85330,#e04a22,#b53410'], ['SVG/EMF', 'S', '#ffe0a0,#ffc24a,#eeb03a,#b8801a'], ['Html', 'H', '#e5acff,#c568f8,#b455dd,#7a1fb0'], ['Visio', 'V', '#93c6ff,#3f86f5,#3f92f0,#0c5ed0'], ['PS/EPS', 'PS', '#b5b0ff,#6255f0,#6a60e0,#2e1f9c']];
define('format-menu', () => ({
  css: `:host{background:#fff;border-radius:6px;box-shadow:0 3px 12px #00000024;padding:6px;--pad:13px;--mgap:9px}`,
  html: FORMATS.map(([t, m, c]) => `<menu-item ${t === 'Visio' ? 'on' : ''}><file-badge slot="icon" mark="${m}" colors="${c}"></file-badge>${t}</menu-item>`).join('')
}));

define('app-shell', () => ({
  css: `:host{display:grid;grid-template-rows:30px 100px minmax(0,1fr) 29px;height:100vh;position:relative}main{display:flex;min-height:0}
  file-menu{position:absolute;left:28px;top:31px;width:215px}format-menu{position:absolute;left:247px;top:264px;width:172px}`,
  html: `<title-bar></title-bar><ribbon-bar></ribbon-bar><main><side-rail></side-rail><symbol-panel></symbol-panel><drawing-area></drawing-area><tool-rail></tool-rail><line-properties></line-properties></main><status-bar></status-bar><file-menu></file-menu><format-menu></format-menu>`
}));
</script>
</body>
</html>
